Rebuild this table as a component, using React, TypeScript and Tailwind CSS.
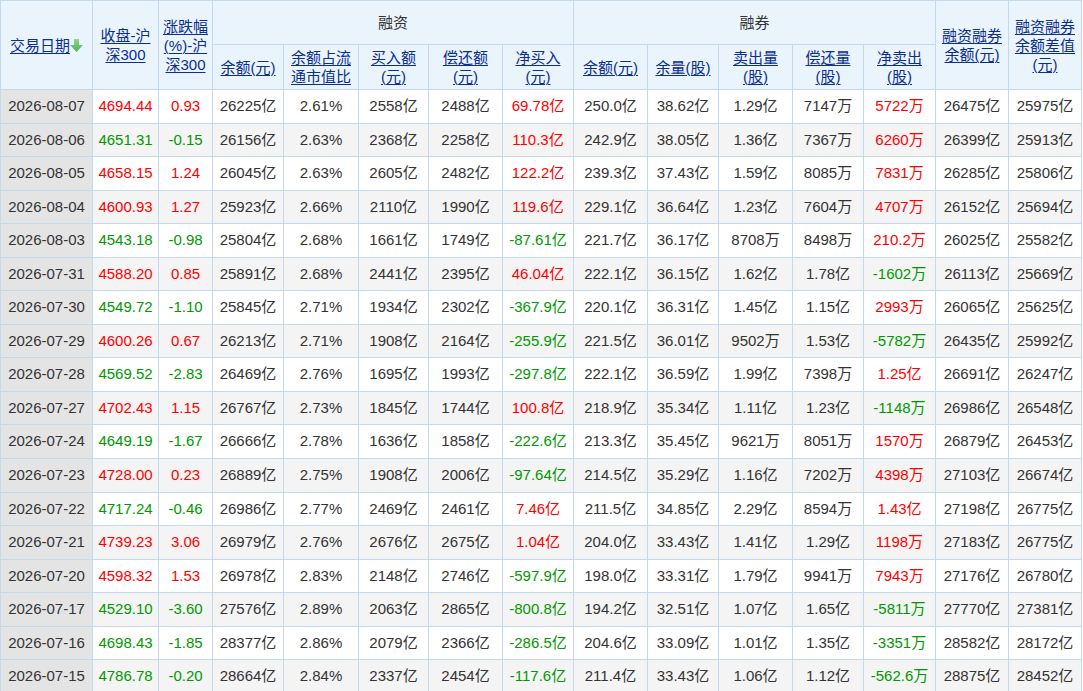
import React from "react"

type Row = string[]

// date, close, change, 融资: 余额, 占比, 买入, 偿还, 净买入, 融券: 余额, 余量, 卖出, 偿还, 净卖出, 两融余额, 差值
const rows: Row[] = [
  ["2026-08-07", "4694.44", "0.93", "26225亿", "2.61%", "2558亿", "2488亿", "69.78亿", "250.0亿", "38.62亿", "1.29亿", "7147万", "5722万", "26475亿", "25975亿"],
  ["2026-08-06", "4651.31", "-0.15", "26156亿", "2.63%", "2368亿", "2258亿", "110.3亿", "242.9亿", "38.05亿", "1.36亿", "7367万", "6260万", "26399亿", "25913亿"],
  ["2026-08-05", "4658.15", "1.24", "26045亿", "2.63%", "2605亿", "2482亿", "122.2亿", "239.3亿", "37.43亿", "1.59亿", "8085万", "7831万", "26285亿", "25806亿"],
  ["2026-08-04", "4600.93", "1.27", "25923亿", "2.66%", "2110亿", "1990亿", "119.6亿", "229.1亿", "36.64亿", "1.23亿", "7604万", "4707万", "26152亿", "25694亿"],
  ["2026-08-03", "4543.18", "-0.98", "25804亿", "2.68%", "1661亿", "1749亿", "-87.61亿", "221.7亿", "36.17亿", "8708万", "8498万", "210.2万", "26025亿", "25582亿"],
  ["2026-07-31", "4588.20", "0.85", "25891亿", "2.68%", "2441亿", "2395亿", "46.04亿", "222.1亿", "36.15亿", "1.62亿", "1.78亿", "-1602万", "26113亿", "25669亿"],
  ["2026-07-30", "4549.72", "-1.10", "25845亿", "2.71%", "1934亿", "2302亿", "-367.9亿", "220.1亿", "36.31亿", "1.45亿", "1.15亿", "2993万", "26065亿", "25625亿"],
  ["2026-07-29", "4600.26", "0.67", "26213亿", "2.71%", "1908亿", "2164亿", "-255.9亿", "221.5亿", "36.01亿", "9502万", "1.53亿", "-5782万", "26435亿", "25992亿"],
  ["2026-07-28", "4569.52", "-2.83", "26469亿", "2.76%", "1695亿", "1993亿", "-297.8亿", "222.1亿", "36.59亿", "1.99亿", "7398万", "1.25亿", "26691亿", "26247亿"],
  ["2026-07-27", "4702.43", "1.15", "26767亿", "2.73%", "1845亿", "1744亿", "100.8亿", "218.9亿", "35.34亿", "1.11亿", "1.23亿", "-1148万", "26986亿", "26548亿"],
  ["2026-07-24", "4649.19", "-1.67", "26666亿", "2.78%", "1636亿", "1858亿", "-222.6亿", "213.3亿", "35.45亿", "9621万", "8051万", "1570万", "26879亿", "26453亿"],
  ["2026-07-23", "4728.00", "0.23", "26889亿", "2.75%", "1908亿", "2006亿", "-97.64亿", "214.5亿", "35.29亿", "1.16亿", "7202万", "4398万", "27103亿", "26674亿"],
  ["2026-07-22", "4717.24", "-0.46", "26986亿", "2.77%", "2469亿", "2461亿", "7.46亿", "211.5亿", "34.85亿", "2.29亿", "8594万", "1.43亿", "27198亿", "26775亿"],
  ["2026-07-21", "4739.23", "3.06", "26979亿", "2.76%", "2676亿", "2675亿", "1.04亿", "204.0亿", "33.43亿", "1.41亿", "1.29亿", "1198万", "27183亿", "26775亿"],
  ["2026-07-20", "4598.32", "1.53", "26978亿", "2.83%", "2148亿", "2746亿", "-597.9亿", "198.0亿", "33.31亿", "1.79亿", "9941万", "7943万", "27176亿", "26780亿"],
  ["2026-07-17", "4529.10", "-3.60", "27576亿", "2.89%", "2063亿", "2865亿", "-800.8亿", "194.2亿", "32.51亿", "1.07亿", "1.65亿", "-5811万", "27770亿", "27381亿"],
  ["2026-07-16", "4698.43", "-1.85", "28377亿", "2.86%", "2079亿", "2366亿", "-286.5亿", "204.6亿", "33.09亿", "1.01亿", "1.35亿", "-3351万", "28582亿", "28172亿"],
  ["2026-07-15", "4786.78", "-0.20", "28664亿", "2.84%", "2337亿", "2454亿", "-117.6亿", "211.4亿", "33.43亿", "1.06亿", "1.12亿", "-562.6万", "28875亿", "28452亿"],
]

const widths = [92, 66, 54, 71, 75, 70, 74, 71, 74, 71, 74, 71, 72, 73, 73]

function signColor(v: string) {
  return v.startsWith("-") ? "text-[#009900]" : "text-[#ff0000]"
}

function SortArrow() {
  return (
    <svg width="13" height="13" viewBox="0 0 13 13" className="inline-block align-[-1px]">
      <defs>
        <linearGradient id="ga" x1="0" y1="0" x2="0" y2="1">
          <stop offset="0" stopColor="#8fd48f" />
          <stop offset="1" stopColor="#4db34d" />
        </linearGradient>
      </defs>
      <path d="M4 0h5v6h4l-6.5 7L0 6h4z" fill="url(#ga)" />
    </svg>
  )
}

function HeadLink({ lines }: { lines: string[] }) {
  return (
    <span className="inline-block text-[#0c2f8f] underline underline-offset-2 decoration-1">
      {lines.map((l, i) => (
        <span key={i} className="block">{l}</span>
      ))}
    </span>
  )
}

const th = "border border-[#c5d9ec] bg-[#eaf4fd] font-normal text-center align-middle leading-[19px] px-0"

export default function App() {
  return (
    <div className="w-[1083px] h-[691px] overflow-hidden bg-white font-['Liberation_Sans','Noto_Sans_CJK_SC',sans-serif] text-[15px] text-[#333]">
      <table className="table-fixed border-collapse w-[1081px]">
        <colgroup>
          {widths.map((w, i) => (
            <col key={i} style={{ width: w }} />
          ))}
        </colgroup>
        <thead>
          <tr className="h-[44px]">
            <th rowSpan={2} className={th}>
              <span className="text-[#0c2f8f] underline underline-offset-2">交易日期</span>
              <SortArrow />
            </th>
            <th rowSpan={2} className={th}>
              <HeadLink lines={["收盘-沪", "深300"]} />
            </th>
            <th rowSpan={2} className={th}>
              <HeadLink lines={["涨跌幅", "(%)-沪", "深300"]} />
            </th>
            <th colSpan={5} className={th}>融资</th>
            <th colSpan={5} className={th}>融券</th>
            <th rowSpan={2} className={th}>
              <HeadLink lines={["融资融券", "余额(元)"]} />
            </th>
            <th rowSpan={2} className={th}>
              <HeadLink lines={["融资融券", "余额差值", "(元)"]} />
            </th>
          </tr>
          <tr className="h-[45px]">
            <th className={th}><HeadLink lines={["余额(元)"]} /></th>
            <th className={th}><HeadLink lines={["余额占流", "通市值比"]} /></th>
            <th className={th}><HeadLink lines={["买入额", "(元)"]} /></th>
            <th className={th}><HeadLink lines={["偿还额", "(元)"]} /></th>
            <th className={th}><HeadLink lines={["净买入", "(元)"]} /></th>
            <th className={th}><HeadLink lines={["余额(元)"]} /></th>
            <th className={th}><HeadLink lines={["余量(股)"]} /></th>
            <th className={th}><HeadLink lines={["卖出量", "(股)"]} /></th>
            <th className={th}><HeadLink lines={["偿还量", "(股)"]} /></th>
            <th className={th}><HeadLink lines={["净卖出", "(股)"]} /></th>
          </tr>
        </thead>
        <tbody>
          {rows.map((r, ri) => (
            <tr key={r[0]} className={`h-[33.55px] ${ri % 2 === 1 ? "bg-[#f4f4f4]" : "bg-white"}`}>
              {r.map((v, ci) => {
                let color = ""
                if (ci === 1) color = signColor(r[2])
                else if (ci === 2 || ci === 7 || ci === 12) color = signColor(v)
                return (
                  <td
                    key={ci}
                    className={`border border-[#c5d9ec] text-center align-middle p-0 whitespace-nowrap ${
                      ci === 0 ? "bg-[#e4e4e4]" : ""
                    } ${color}`}
                  >
                    {v}
                  </td>
                )
              })}
            </tr>
          ))}
        </tbody>
      </table>
    </div>
  )
}
